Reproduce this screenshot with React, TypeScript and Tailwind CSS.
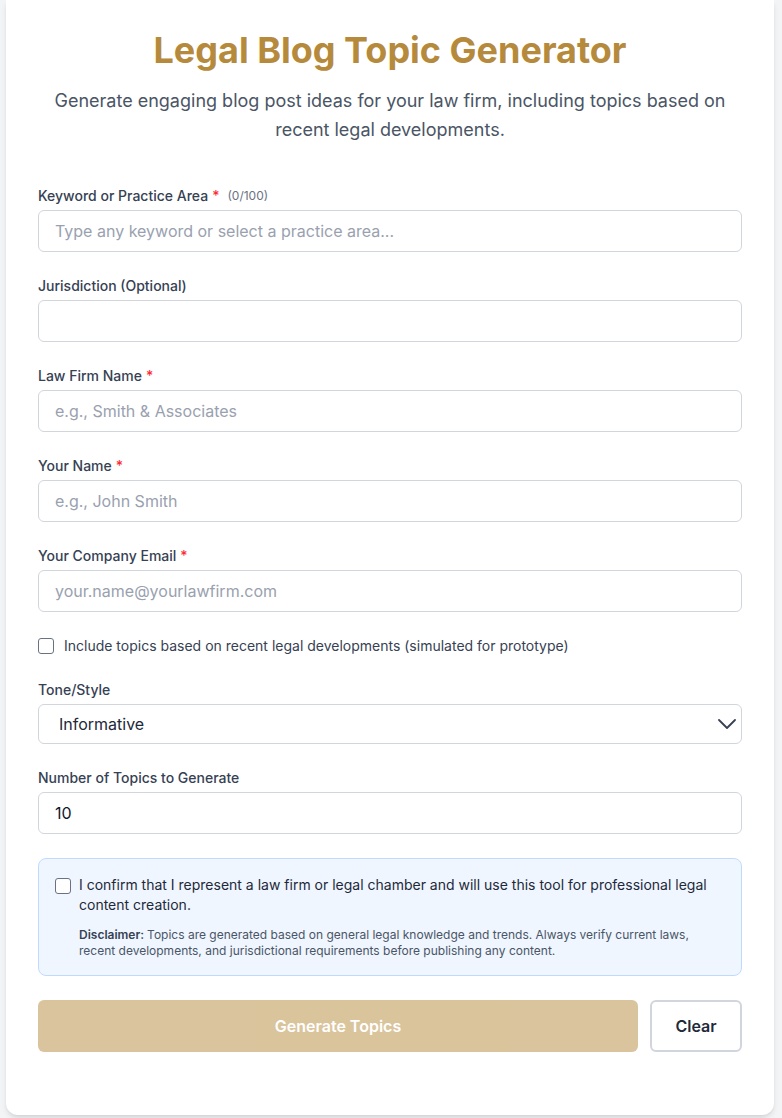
import { useState } from 'react'

const fieldClass =
    'h-[42px] w-full rounded-md border border-gray-300 bg-white px-4 text-base text-gray-900 placeholder:text-gray-400 focus:outline-none'

interface FieldProps {
    label: string;
    required?: boolean;
    hint?: string;
    placeholder?: string;
    value?: string;
    onChange?: (v: string) => void;
}

const Field = ({ label, required, hint, placeholder, value, onChange }: FieldProps) => {
    return (
        <div>
            <label className="mb-1 flex items-center text-sm font-medium leading-5 text-gray-700">
                {label}
                {required && <span className="ml-1 text-red-500">*</span>}
                {hint && <span className="ml-2 text-xs font-normal text-gray-500">{hint}</span>}
            </label>
            <input
                className={fieldClass}
                placeholder={placeholder}
                value={value}
                onChange={(e) => onChange?.(e.target.value)}
            />
        </div>
    )
}

const Checkbox = () => (
    <input
        type="checkbox"
        className="h-4 w-4 shrink-0 appearance-none rounded-[3px] border border-gray-500 bg-white"
    />
)

const App = () => {
    const [keyword, setKeyword] = useState('')
    const [jurisdiction, setJurisdiction] = useState('')
    const [firm, setFirm] = useState('')
    const [name, setName] = useState('')
    const [email, setEmail] = useState('')
    const [count, setCount] = useState('10')

    return (
        <div className="min-h-screen bg-gray-100 pl-[6px] pr-[8px] pb-[5px]" style={{ fontFamily: 'Inter, "Noto Sans", sans-serif' }}>
            <div className="rounded-b-xl bg-white px-8 pb-[63px] pt-[30px] shadow-md">
                <h1 className="text-center text-4xl font-bold text-[#b68a3c]">Legal Blog Topic Generator</h1>
                <p className="mx-auto mt-4 mb-[42px] max-w-[680px] text-center text-lg leading-[29px] text-gray-600">
                    Generate engaging blog post ideas for your law firm, including topics based on recent legal developments.
                </p>

                <div className="space-y-6">
                    <Field
                        label="Keyword or Practice Area"
                        required
                        hint={`(${keyword.length}/100)`}
                        placeholder="Type any keyword or select a practice area..."
                        value={keyword}
                        onChange={setKeyword}
                    />
                    <Field label="Jurisdiction (Optional)" value={jurisdiction} onChange={setJurisdiction} />
                    <Field label="Law Firm Name" required placeholder="e.g., Smith & Associates" value={firm} onChange={setFirm} />
                    <Field label="Your Name" required placeholder="e.g., John Smith" value={name} onChange={setName} />
                    <Field label="Your Company Email" required placeholder="your.name@yourlawfirm.com" value={email} onChange={setEmail} />

                    <label className="flex items-center gap-[10px] text-sm leading-5 text-gray-700">
                        <Checkbox />
                        Include topics based on recent legal developments (simulated for prototype)
                    </label>

                    <div>
                        <label className="mb-1 block text-sm font-medium leading-5 text-gray-700">Tone/Style</label>
                        <div className="relative">
                            <select className="h-10 w-full appearance-none rounded-md border border-gray-300 bg-white px-5 text-base text-gray-800 focus:outline-none">
                                <option>Informative</option>
                                <option>Conversational</option>
                                <option>Authoritative</option>
                            </select>
                            <svg
                                className="pointer-events-none absolute right-[6px] top-1/2 -translate-y-1/2"
                                width="18"
                                height="10"
                                viewBox="0 0 18 10"
                                fill="none"
                                stroke="#374151"
                                strokeWidth="1.8"
                                strokeLinecap="round"
                                strokeLinejoin="round"
                            >
                                <polyline points="1,1 9,9 17,1" />
                            </svg>
                        </div>
                    </div>

                    <div>
                        <label className="mb-1 block text-sm font-medium leading-5 text-gray-700">Number of Topics to Generate</label>
                        <input type="text" className={fieldClass} value={count} onChange={(e) => setCount(e.target.value)} />
                    </div>

                    <div className="rounded-lg border border-blue-200 bg-blue-50 px-4 py-4">
                        <label className="flex items-start gap-2 text-sm leading-5 text-gray-800">
                            <span className="mt-[3px] flex">
                                <Checkbox />
                            </span>
                            I confirm that I represent a law firm or legal chamber and will use this tool for professional legal content creation.
                        </label>
                        <p className="mt-3 pl-6 text-xs leading-4 text-gray-600">
                            <span className="font-semibold text-gray-700">Disclaimer: </span>
                            Topics are generated based on general legal knowledge and trends. Always verify current laws, recent developments, and jurisdictional requirements before publishing any content.
                        </p>
                    </div>
                </div>

                <div className="mt-6 flex gap-3">
                    <button className="h-[52px] flex-1 rounded-md bg-[#b68a3c] text-base font-semibold text-white opacity-50">
                        Generate Topics
                    </button>
                    <button className="h-[52px] w-[92px] rounded-md border-2 border-gray-300 bg-white text-base font-semibold text-gray-800">
                        Clear
                    </button>
                </div>
            </div>
        </div>
    )
}

export default App
